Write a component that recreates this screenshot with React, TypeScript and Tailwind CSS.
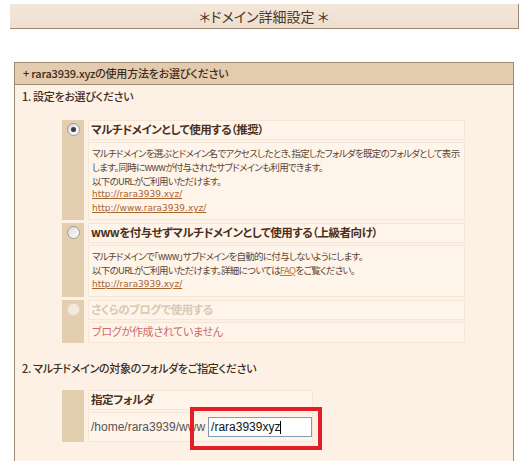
import React from "react";

function Radio({ checked, disabled }: { checked?: boolean; disabled?: boolean }) {
  return (
    <div
      className={`w-[13px] h-[13px] rounded-full border flex items-center justify-center ${
        disabled
          ? "border-[#e4d6c6] bg-[#f3e9de]"
          : "border-[#9a9a9a] bg-[linear-gradient(135deg,#d8d8d8,#ffffff)]"
      }`}
    >
      {checked && <div className="w-[5px] h-[5px] rounded-full bg-[#3c3c3c]" />}
    </div>
  );
}

function Option({
  label,
  checked,
  disabled,
  labelClass,
  descH,
  children,
}: {
  label: string;
  checked?: boolean;
  disabled?: boolean;
  labelClass: string;
  descH: string;
  children: React.ReactNode;
}) {
  return (
    <div className="flex">
      <div className="w-[22px] bg-[#e3ceb0] flex justify-center pt-[3px] shrink-0">
        <Radio checked={checked} disabled={disabled} />
      </div>
      <div className="w-[4px] shrink-0" />
      <div className="w-[377px] flex flex-col gap-[2px]">
        <div className="h-[20px] border border-[#f5e6d6] bg-[#fff4e9] flex items-center pl-[2px]">
          <span className={`text-[11.5px] tracking-[-0.5px] font-bold whitespace-nowrap ${labelClass}`}>{label}</span>
        </div>
        <div className={`${descH} border border-[#f5e6d6] bg-[#fff4e9] pl-[3px] pt-[4px] text-[9.5px] tracking-[-0.7px] leading-[13.8px] text-[#5a4636] whitespace-nowrap`}>
          {children}
        </div>
      </div>
    </div>
  );
}

export default function App() {
  const link = "text-[#a8642c] underline font-['DejaVu_Sans',sans-serif] text-[9px] tracking-[0px]";
  return (
    <div className="w-[531px] h-[461px] bg-white overflow-hidden font-['Noto_Sans_CJK_JP',sans-serif] [font-feature-settings:'palt'] text-[#4b3526] relative">
      {/* title */}
      <div className="ml-[10px] mt-[4px] w-[509px] h-[25px] bg-[linear-gradient(#f3e7da,#eedfcf)] border-r border-b border-[#9c8670] flex items-center justify-center">
        <span className="text-[14px] text-[#4e3626]">＊ドメイン詳細設定 ＊</span>
      </div>

      {/* section */}
      <div className="ml-[14px] mt-[33px] w-[500px] h-[420px] border border-[#a08a72] bg-[#fdf1e5]">
        <div className="h-[22px] bg-[#e2ccad] border-b border-[#a08a72] flex items-center pl-[8px]">
          <span className="text-[11px] tracking-[-0.2px] font-medium text-[#3f2c1f]">+ rara3939.xyzの使用方法をお選びください</span>
        </div>
        <div className="pl-[7px] pt-[2px] h-[20px] flex items-center">
          <span className="text-[11px] tracking-[-0.3px] font-medium text-[#3f2c1f]">1. 設定をお選びください</span>
        </div>

        <div className="ml-[47px] mt-[15px] flex flex-col gap-[3px]">
          <Option label="マルチドメインとして使用する（推奨）" checked labelClass="text-[#4b3020]" descH="h-[78px]">
            <div>マルチドメインを選ぶとドメイン名でアクセスしたとき、指定したフォルダを既定のフォルダとして表示</div>
            <div>します。同時にwwwが付与されたサブドメインも利用できます。</div>
            <div>以下のURLがご利用いただけます。</div>
            <div className={link}>http://rara3939.xyz/</div>
            <div className={link}>http://www.rara3939.xyz/</div>
          </Option>
          <Option label="wwwを付与せずマルチドメインとして使用する（上級者向け）" labelClass="text-[#4b3020]" descH="h-[52px]">
            <div>マルチドメインで「www」サブドメインを自動的に付与しないようにします。</div>
            <div>
              以下のURLがご利用いただけます。詳細については
              <span className="text-[#c07a2c] underline">FAQ</span>をご覧ください。
            </div>
            <div className={link}>http://rara3939.xyz/</div>
          </Option>
          <Option label="さくらのブログで使用する" disabled labelClass="text-[#d9c8b6]" descH="h-[21px]">
            <div className="text-[#cf6a6a] text-[11px] tracking-[-0.3px] leading-[12px] -mt-[2px]">ブログが作成されていません</div>
          </Option>
        </div>

        <div className="pl-[7px] mt-[17px] h-[16px] flex items-center">
          <span className="text-[11px] tracking-[-0.3px] font-medium text-[#3f2c1f]">2. マルチドメインの対象のフォルダをご指定ください</span>
        </div>

        <div className="ml-[47px] mt-[14px] flex">
          <div className="w-[22px] bg-[#e3ceb0] shrink-0" />
          <div className="w-[4px] shrink-0" />
          <div className="w-[225px] flex flex-col gap-[2px]">
            <div className="h-[20px] border border-[#f5e6d6] bg-[#fff4e9] flex items-center pl-[2px]">
              <span className="text-[11.5px] tracking-[-0.4px] font-bold text-[#4b3020]">指定フォルダ</span>
            </div>
            <div className="h-[30px] border border-[#f5e6d6] bg-[#fff4e9] flex items-center pl-[2px] gap-[3px]">
              <span className="font-['Liberation_Sans',sans-serif] text-[12px] text-[#555]">/home/rara3939/www</span>
              <div className="w-[105px] h-[20px] border border-[#7f9db9] bg-white flex items-center pl-[2px]">
                <span className="font-['Liberation_Sans',sans-serif] text-[12px] text-[#111]">/rara3939xyz</span>
                <span className="w-[1px] h-[13px] bg-black" />
              </div>
            </div>
          </div>
        </div>
      </div>

      {/* red annotation */}
      <div className="absolute left-[190px] top-[407px] w-[132px] h-[43px] border-[4px] border-[#e41e26]" />
    </div>
  );
}
